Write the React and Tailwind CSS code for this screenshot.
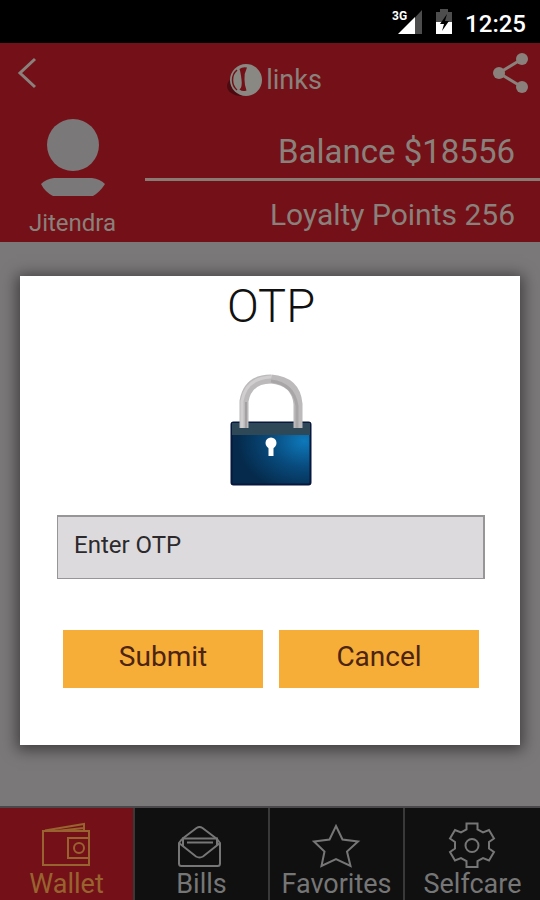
import { useState } from 'react';

const WalletIcon = () => (
  <svg width="50" height="46" viewBox="0 0 50 46" fill="none" stroke="currentColor" strokeWidth="2">
    <path d="M1 9h46v34H1z" />
    <path d="M3 8.500L42 2v7M14 9l28-3" />
    <path d="M47 16H26v20h21" />
    <circle cx="37" cy="26" r="5" />
  </svg>
);

const BillsIcon = () => (
  <svg width="50" height="46" viewBox="0 0 50 46" fill="none" stroke="currentColor" strokeWidth="2">
    <path d="M5 17l-3 4v20.500q0 2.500 2.500 2.500h36q2.500 0 2.500-2.500V21l-3-4" />
    <path d="M5 17L19.500 6q3-2 6 0L40 17" />
    <path d="M2 21l17 13.500q3.500 2 7 0L43 21" />
    <path d="M6 24v-7.500h34V24M10 20.500h26" />
  </svg>
);

const StarIcon = () => (
  <svg width="50" height="46" viewBox="1 0 50 46" fill="none" stroke="currentColor" strokeWidth="2">
    <path d="M25 4l6.500 13.500L47 19.500 36 29.500l3.500 14.500L25 37 10.500 44l3-14.500L3 19.500l15.500-2z" />
  </svg>
);

const GearIcon = () => (
  <svg width="50" height="46" viewBox="1 0 50 46" fill="none" stroke="currentColor" strokeWidth="2">
    <path d="M19.500 1.500h11v6l5.500 3 6-2.500 5 8.500-5 3.500v6.500l5 3.500-5 8.500-6-2.500-5.500 3v6h-11v-6l-5.500-3-6 2.500L3 30l5-3.500V20l-5-3.500L8 8l6 2.500 5.500-3z" />
    <circle cx="25" cy="23.500" r="6.500" />
  </svg>
);

const tabs = [
  { label: 'Wallet', icon: WalletIcon },
  { label: 'Bills', icon: BillsIcon },
  { label: 'Favorites', icon: StarIcon },
  { label: 'Selfcare', icon: GearIcon },
];

function StatusBar() {
  return (
    <div className="h-[43px] bg-black text-white flex items-center justify-end gap-3 pr-3.5">
      <svg width="31" height="26" viewBox="0 0 31 26" role="img" aria-label="3G signal">
        <path d="M23 8.500L30 1v24h-7z" fill="#4d4d4d" />
        <path d="M6 25L23 8v17z" fill="#fff" />
        <text x="0" y="11" fontSize="12" fontWeight="700" fill="#fff" fontFamily="Roboto, sans-serif">3G</text>
      </svg>
      <svg width="18" height="26" viewBox="0 0 18 26" role="img" aria-label="Battery charging">
        <path d="M1 3h4V0h8v3h4v11H1z" fill="#4d4d4d" />
        <path d="M1 13h16v12H1z" fill="#fff" />
        <path d="M12 5l-7 10h4l-2 7 7-10h-4z" fill="#000" />
      </svg>
      <span className="text-2xl leading-7 font-medium pt-1">12:25</span>
    </div>
  );
}

function Logo() {
  return (
    <div className="flex items-center gap-1 pt-3.5 pl-1">
      <svg width="36" height="36" viewBox="0 0 36 36" aria-hidden="true">
        <ellipse cx="15" cy="24" rx="14" ry="10" fill="#4c0a10" />
        <circle cx="20" cy="18" r="16" fill="#8a8882" />
        <path d="M13.500 7q3-2.500 7.500-1.500-3 6-2.500 12 0 6 2 11-4 1.500-7-1 3-2 2-10t-2-10.500z" fill="#741118" />
        <path d="M11 8C5 13 5 23 11 28" fill="none" stroke="#741118" strokeWidth="1.500" />
      </svg>
      <span className="font-['Liberation_Sans_Narrow','Roboto',sans-serif] text-[27px] leading-8">links</span>
    </div>
  );
}

function Header() {
  return (
    <header className="bg-[#741118] text-[#8a817c]">
      <div className="h-[60px] flex items-center justify-between pl-4 pr-3">
        <button type="button" aria-label="Back">
          <svg width="35" height="32" viewBox="0 0 35 32" fill="none" stroke="currentColor" strokeWidth="3">
            <path d="M19 2L4 16l15 14" />
          </svg>
        </button>
        <Logo />
        <button type="button" aria-label="Share">
          <svg width="35" height="40" viewBox="0 0 35 40" fill="currentColor">
            <path d="M29 6L6 20l23 14" fill="none" stroke="currentColor" strokeWidth="3" />
            <circle cx="29" cy="6" r="6" />
            <circle cx="6" cy="20" r="6" />
            <circle cx="29" cy="34" r="6" />
          </svg>
        </button>
      </div>
      <div className="flex">
        <div className="w-[145px] flex flex-col items-center pt-4 pb-[5px]">
          <svg width="66" height="78" viewBox="0 0 66 78" fill="#7b787a" aria-hidden="true">
            <circle cx="33" cy="26" r="26" />
            <path d="M14 59h38q8 1 13 6-5 8-12 12H13Q5 73 1 65q5-5 13-6z" />
          </svg>
          <span className="text-2xl leading-7 mt-3">Jitendra</span>
        </div>
        <div className="flex-1 text-right">
          <p className="pt-[29px] pb-1.5 pr-[25px] text-[33px] leading-10 border-b-3 border-[#8a7a74]">Balance $18556</p>
          <p className="pt-3.5 pr-[25px] text-[30px] leading-10">Loyalty Points 256</p>
        </div>
      </div>
    </header>
  );
}

function Padlock() {
  return (
    <svg width="82" height="112" viewBox="0 0 82 112" aria-hidden="true">
      <defs>
        <radialGradient id="body" cx="0.92" cy="0.3" r="0.85">
          <stop offset="0" stopColor="#0e79bb" />
          <stop offset="0.500" stopColor="#084a7c" />
          <stop offset="1" stopColor="#052a4b" />
        </radialGradient>
      </defs>
      <rect x="1.500" y="48.500" width="79" height="62" rx="2" fill="url(#body)" stroke="#08173c" strokeWidth="2" />
      <path d="M2 49h78v12H2z" fill="#2f4858" />
      <path d="M14 54V27Q18 5 41 5" fill="none" stroke="#bcbabb" strokeWidth="9" />
      <path d="M41 5q25 2 27 25v24" fill="none" stroke="#bcbabb" strokeWidth="9" />
      <path d="M41 7q23 3 26 25v22" fill="none" stroke="#a8a6a7" strokeWidth="3" />
      <path d="M12 54V27Q16 4 41 3" fill="none" stroke="#d0cecf" strokeWidth="3" />
      <path d="M16 54V28" fill="none" stroke="#a3a1a2" strokeWidth="2" />
      <circle cx="41" cy="69" r="5.500" fill="#fff" />
      <path d="M38.500 71h5v11h-5z" fill="#fff" />
    </svg>
  );
}

function OtpDialog() {
  const [otp, setOtp] = useState('');

  return (
    <form
      role="dialog"
      aria-labelledby="otp-title"
      className="bg-white pl-[37px] pr-[35px] pt-0.5 pb-[57px] flex flex-col items-center shadow-[0_2px_14px_3px_rgba(0,0,0,0.5)]"
      onSubmit={(e) => e.preventDefault()}
    >
      <h1 id="otp-title" className="text-[47px] leading-14 font-light text-[#111]">OTP</h1>
      <div className="mt-10">
        <Padlock />
      </div>
      <input
        type="text"
        aria-label="Enter OTP"
        placeholder="Enter OTP"
        value={otp}
        onChange={(e) => setOtp(e.target.value)}
        className="mt-[29px] w-full h-16 px-4 pb-1.5 bg-[#dddadd] border border-t-2 border-r-2 border-[#979597] text-2xl text-[#2c2a2c] placeholder:text-[#2c2a2c] outline-none"
      />
      <div className="mt-[51px] w-full px-1.5 flex gap-4 text-[28px] leading-9 text-[#4d2312]">
        <button type="submit" className="flex-1 h-[58px] pb-1 bg-[#f6ae38]">Submit</button>
        <button type="button" className="flex-1 h-[58px] pb-1 bg-[#f6ae38]">Cancel</button>
      </div>
    </form>
  );
}

function TabBar() {
  const [active, setActive] = useState('Wallet');

  return (
    <nav className="grid grid-cols-4 border-t-2 border-[#4a484a] bg-[#101010]">
      {tabs.map((tab) => (
        <button
          key={tab.label}
          type="button"
          onClick={() => setActive(tab.label)}
          className={`flex flex-col items-center pt-3.5 border-r-2 border-[#3a393a] last:border-r-0 text-[27px] leading-8 ${
            active === tab.label ? 'bg-[#741118] text-[#99632f]' : 'text-[#767676]'
          }`}
        >
          <tab.icon />
          <span>{tab.label}</span>
        </button>
      ))}
    </nav>
  );
}

export default function App() {
  return (
    <div className="min-h-screen flex flex-col bg-[#7b787a] font-['Roboto',sans-serif]">
      <StatusBar />
      <Header />
      <main className="flex-1 px-5 pt-[34px] pb-5">
        <OtpDialog />
      </main>
      <TabBar />
    </div>
  );
}
